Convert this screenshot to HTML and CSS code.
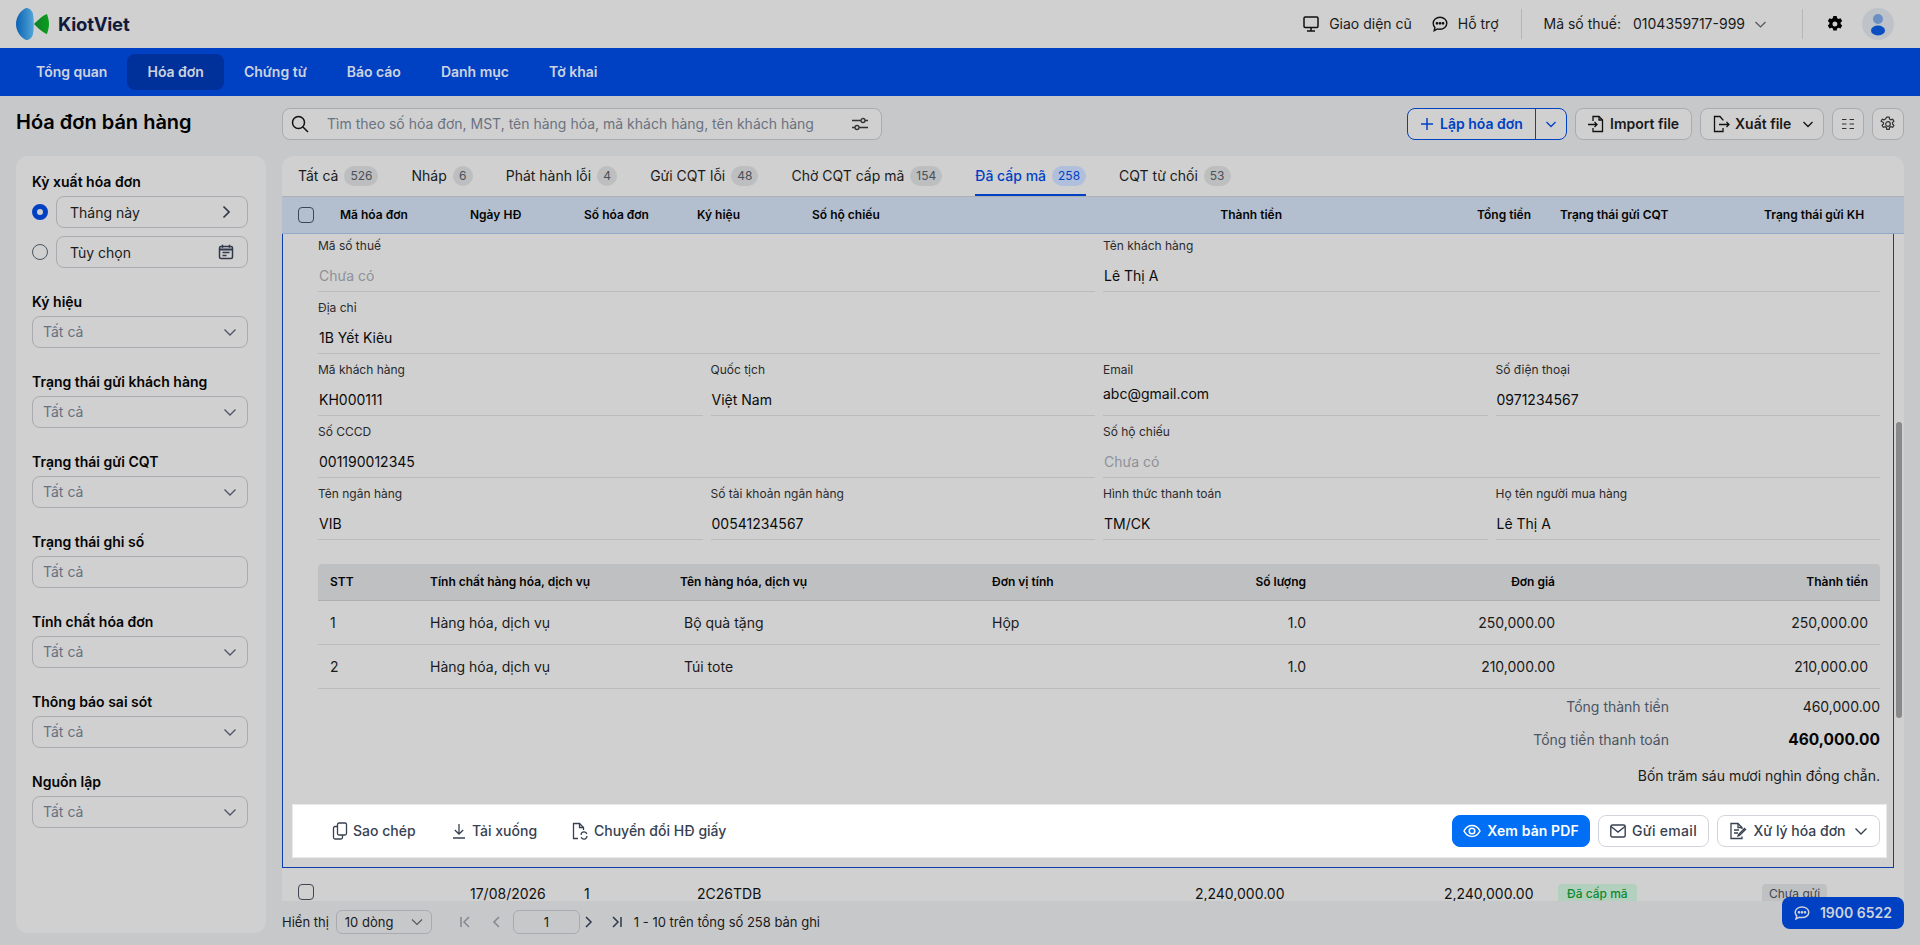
FILE: index.html
```html
<!DOCTYPE html>
<html lang="vi">
<head>
<meta charset="utf-8">
<title>Hóa đơn bán hàng</title>
<link rel="stylesheet" href="styles.css">
</head>
<body>
<header class="topbar">
  <div class="brand">
    <svg class="logo" width="36" height="32" viewBox="0 0 36 32"><defs><linearGradient id="lg1" x1="0" x2="1" y1="0" y2="0"><stop offset="0" stop-color="#0a62b4"/><stop offset="1" stop-color="#52a6d6"/></linearGradient><linearGradient id="lg2" x1="0" x2="1" y1="0" y2="0"><stop offset="0" stop-color="#0d7f2a"/><stop offset="1" stop-color="#0b9e1c"/></linearGradient></defs><path d="M10 0C4 3 0 9 0 16s4 13 10 16c3 0 6-2 7-6 1-6 1-14 0-20C16 2 13 0 10 0z" fill="url(#lg1)"/><path d="M31 6c-1 0-2 1-4 2-3 2-6 5-9 8 3 3 6 6 9 8 2 1 3 2 4 2 1-3 2-7 2-10s-1-7-2-10z" fill="url(#lg2)"/></svg>
    <span class="brand-name">KiotViet</span>
  </div>
  <div class="top-right">
    <a class="top-link">
      <svg width="16" height="16" viewBox="0 0 16 16" fill="none" stroke="#111" stroke-width="1.5"><rect x="1" y="1" width="14" height="10.5" rx="1.2"/><path d="M8 11.5V15M4 15h8"/></svg>
      <span>Giao diện cũ</span>
    </a>
    <a class="top-link link-support">
      <svg width="16" height="16" viewBox="0 0 16 16" fill="none" stroke="#111" stroke-width="1.4"><path d="M8 1.3c3.8 0 6.8 2.6 6.8 6s-3 6-6.8 6c-.9 0-1.700-.1-2.500-.4L2.200 14.600l.7-3C1.800 10.500 1.200 9 1.200 7.300c0-3.400 3-6 6.800-6z"/><circle cx="5" cy="7.300" r=".7" fill="#111"/><circle cx="8" cy="7.300" r=".7" fill="#111"/><circle cx="11" cy="7.300" r=".7" fill="#111"/></svg>
      <span>Hỗ trợ</span>
    </a>
    <span class="top-divider"></span>
    <div class="tax">
      <span>Mã số thuế:</span>
      <span>0104359717-999</span>
      <svg class="chev" width="13" height="13" viewBox="0 0 13 13" fill="none" stroke="#555" stroke-width="1.200"><path d="M1.500 4l5 5 5-5"/></svg>
    </div>
    <span class="top-divider second"></span>
    <svg class="gear" width="18" height="18" viewBox="0 0 18 18"><path fill="#000" fill-rule="evenodd" d="M7.300 1h3.400l.4 2.100 1.400.8 2-.7 1.700 2.900-1.600 1.400v1.600l1.600 1.400-1.700 2.900-2-.7-1.400.8-.4 2.100H7.300l-.4-2.100-1.400-.8-2 .7-1.700-2.900 1.600-1.400V7.500L1.800 6.100l1.700-2.900 2 .7 1.400-.8zM9 6.500a2.500 2.500 0 1 0 0 5 2.500 2.500 0 0 0 0-5z"/></svg>
    <div class="avatar">
      <svg width="32" height="32" viewBox="0 0 32 32"><circle cx="16" cy="11" r="5" fill="#6c8fc4"/><ellipse cx="16" cy="22.500" rx="7" ry="5" fill="#0a4ec2"/></svg>
    </div>
  </div>
</header>

<nav class="mainnav">
  <a class="nav-item">Tổng quan</a>
  <a class="nav-item active">Hóa đơn</a>
  <a class="nav-item">Chứng từ</a>
  <a class="nav-item">Báo cáo</a>
  <a class="nav-item">Danh mục</a>
  <a class="nav-item">Tờ khai</a>
</nav>

<div class="page">
  <aside class="left">
    <h1 class="page-title">Hóa đơn bán hàng</h1>
    <div class="filters">
      <section class="filter">
        <label class="flabel">Kỳ xuất hóa đơn</label>
        <div class="radio-row">
          <span class="radio on"></span>
          <div class="control dark"><span>Tháng này</span>
            <svg width="16" height="16" viewBox="0 0 16 16" fill="none" stroke="#30394a" stroke-width="1.700"><path d="M5.500 2.500L11 8l-5.500 5.500"/></svg>
          </div>
        </div>
        <div class="radio-row">
          <span class="radio"></span>
          <div class="control dark"><span>Tùy chọn</span>
            <svg width="16" height="16" viewBox="0 0 16 16" fill="none" stroke="#30394a" stroke-width="1.500"><rect x="1.500" y="2.500" width="13" height="12" rx="1.500"/><path d="M1.500 5.500h13" stroke-width="2"/><path d="M4.500.8v3M11.500.8v3M4.500 8.500h7M4.500 11.500h4"/></svg>
          </div>
        </div>
      </section>
      <section class="filter"><label class="flabel">Ký hiệu</label><div class="control"><span>Tất cả</span><svg class="sel-chev" width="14" height="14" viewBox="0 0 14 14" fill="none" stroke="#4b5563" stroke-width="1.300"><path d="M1.500 4.500L7 10l5.500-5.500"/></svg></div></section>
      <section class="filter"><label class="flabel">Trạng thái gửi khách hàng</label><div class="control"><span>Tất cả</span><svg class="sel-chev" width="14" height="14" viewBox="0 0 14 14" fill="none" stroke="#4b5563" stroke-width="1.300"><path d="M1.500 4.500L7 10l5.500-5.500"/></svg></div></section>
      <section class="filter"><label class="flabel">Trạng thái gửi CQT</label><div class="control"><span>Tất cả</span><svg class="sel-chev" width="14" height="14" viewBox="0 0 14 14" fill="none" stroke="#4b5563" stroke-width="1.300"><path d="M1.500 4.500L7 10l5.500-5.500"/></svg></div></section>
      <section class="filter"><label class="flabel">Trạng thái ghi số</label><div class="control"><span>Tất cả</span></div></section>
      <section class="filter"><label class="flabel">Tính chất hóa đơn</label><div class="control"><span>Tất cả</span><svg class="sel-chev" width="14" height="14" viewBox="0 0 14 14" fill="none" stroke="#4b5563" stroke-width="1.300"><path d="M1.500 4.500L7 10l5.500-5.500"/></svg></div></section>
      <section class="filter"><label class="flabel">Thông báo sai sót</label><div class="control"><span>Tất cả</span><svg class="sel-chev" width="14" height="14" viewBox="0 0 14 14" fill="none" stroke="#4b5563" stroke-width="1.300"><path d="M1.500 4.500L7 10l5.500-5.500"/></svg></div></section>
      <section class="filter"><label class="flabel">Nguồn lập</label><div class="control"><span>Tất cả</span><svg class="sel-chev" width="14" height="14" viewBox="0 0 14 14" fill="none" stroke="#4b5563" stroke-width="1.300"><path d="M1.500 4.500L7 10l5.500-5.500"/></svg></div></section>
    </div>
  </aside>

  <main class="right">
    <div class="toolbar">
      <div class="search">
        <svg width="18" height="18" viewBox="0 0 18 18" fill="none" stroke="#111" stroke-width="1.500"><circle cx="7.500" cy="7.500" r="6"/><path d="M12 12l5 5"/></svg>
        <span class="search-text">Tìm theo số hóa đơn, MST, tên hàng hóa, mã khách hàng, tên khách hàng</span>
        <svg width="18" height="16" viewBox="0 0 18 16" fill="none" stroke="#333" stroke-width="1.300"><path d="M1 4.500h9M14 4.500h3M1 11.500h3M8 11.500h9"/><circle cx="12" cy="4.500" r="2"/><circle cx="6" cy="11.500" r="2"/></svg>
      </div>
      <div class="tools">
        <div class="split">
          <span class="split-main"><svg width="14" height="14" viewBox="0 0 14 14" fill="none" stroke="#0041c4" stroke-width="1.500"><path d="M7 1v12M1 7h12"/></svg>Lập hóa đơn</span>
          <span class="split-arrow"><svg width="12" height="12" viewBox="0 0 12 12" fill="none" stroke="#0041c4" stroke-width="1.300"><path d="M1.500 4L6 8.500 10.500 4"/></svg></span>
        </div>
        <button class="tbtn w117"><svg width="18" height="18" viewBox="0 0 18 18" fill="none" stroke="#111" stroke-width="1.300"><path d="M6 6V1.500h6l3.500 3.500v11.500H6V13"/><path d="M1 9.500h9M7.500 7l2.500 2.500L7.500 12"/><path d="M12 1.500V5h3.500"/></svg>Import file</button>
        <button class="tbtn w123"><svg width="18" height="18" viewBox="0 0 18 18" fill="none" stroke="#111" stroke-width="1.300"><path d="M11 5.500V5L8 1.500H2.500v15H11V13"/><path d="M7 9.500h10M14.500 7l2.500 2.500-2.500 2.500"/></svg>Xuất file<svg class="mini" width="12" height="12" viewBox="0 0 12 12" fill="none" stroke="#111" stroke-width="1.300"><path d="M1.500 4L6 8.500 10.500 4"/></svg></button>
        <button class="tbtn icon"><svg width="14" height="14" viewBox="0 0 14 14" fill="none" stroke="#333" stroke-width="1.200"><path d="M1 2.500h4.500M8.500 2.500H13M1 7h4.500M8.500 7H13M1 11.500h4.500M8.500 11.500H13"/></svg></button>
        <button class="tbtn icon"><svg width="16" height="16" viewBox="0 0 16 16" fill="none" stroke="#333" stroke-width="1.200"><path d="M6.800 1.200h2.400l.4 1.900 1.300.7 1.800-.6 1.200 2-1.400 1.300v1.500l1.400 1.300-1.200 2-1.800-.6-1.300.7-.4 1.900H6.800l-.4-1.900-1.300-.7-1.800.6-1.200-2 1.400-1.300V6.500L1.100 5.200l1.200-2 1.800.6 1.300-.7z"/><circle cx="8" cy="8" r="2.300"/></svg></button>
      </div>
    </div>

    <div class="panel">
      <div class="tabs">
        <a class="tab">Tất cả<b class="count">526</b></a>
        <a class="tab">Nháp<b class="count">6</b></a>
        <a class="tab">Phát hành lỗi<b class="count">4</b></a>
        <a class="tab">Gửi CQT lỗi<b class="count">48</b></a>
        <a class="tab">Chờ CQT cấp mã<b class="count">154</b></a>
        <a class="tab active">Đã cấp mã<b class="count">258</b></a>
        <a class="tab">CQT từ chối<b class="count">53</b></a>
      </div>
      <div class="cols thead">
        <span class="check"></span>
        <span>Mã hóa đơn</span><span>Ngày HĐ</span><span>Số hóa đơn</span><span>Ký hiệu</span><span>Số hộ chiếu</span>
        <span class="num">Thành tiền</span><span class="num">Tổng tiền</span><span class="gap-l">Trạng thái gửi CQT</span><span>Trạng thái gửi KH</span>
      </div>

      <div class="detail">
        <div class="form">
          <div class="field span2"><label>Mã số thuế</label><div class="val muted">Chưa có</div></div>
          <div class="field span2"><label>Tên khách hàng</label><div class="val">Lê Thị A</div></div>
          <div class="field span4"><label>Địa chỉ</label><div class="val">1B Yết Kiêu</div></div>
          <div class="field"><label>Mã khách hàng</label><div class="val">KH000111</div></div>
          <div class="field"><label>Quốc tịch</label><div class="val">Việt Nam</div></div>
          <div class="field"><label>Email</label><div class="val up">abc@gmail.com</div></div>
          <div class="field"><label>Số điện thoại</label><div class="val">0971234567</div></div>
          <div class="field span2"><label>Số CCCD</label><div class="val">001190012345</div></div>
          <div class="field span2"><label>Số hộ chiếu</label><div class="val muted">Chưa có</div></div>
          <div class="field"><label>Tên ngân hàng</label><div class="val">VIB</div></div>
          <div class="field"><label>Số tài khoản ngân hàng</label><div class="val">00541234567</div></div>
          <div class="field"><label>Hình thức thanh toán</label><div class="val">TM/CK</div></div>
          <div class="field"><label>Họ tên người mua hàng</label><div class="val">Lê Thị A</div></div>
        </div>

        <div class="items">
          <div class="irow ihead"><span>STT</span><span>Tính chất hàng hóa, dịch vụ</span><span>Tên hàng hóa, dịch vụ</span><span>Đơn vị tính</span><span class="num">Số lượng</span><span class="num">Đơn giá</span><span class="num">Thành tiền</span></div>
          <div class="irow"><span>1</span><span>Hàng hóa, dịch vụ</span><span class="nudge">Bộ quà tặng</span><span>Hộp</span><span class="num">1.0</span><span class="num">250,000.00</span><span class="num">250,000.00</span></div>
          <div class="irow"><span>2</span><span>Hàng hóa, dịch vụ</span><span class="nudge">Túi tote</span><span></span><span class="num">1.0</span><span class="num">210,000.00</span><span class="num">210,000.00</span></div>
        </div>

        <div class="totals">
          <div class="trow r1"><span class="tl">Tổng thành tiền</span><span class="tv">460,000.00</span></div>
          <div class="trow r2"><span class="tl">Tổng tiền thanh toán</span><span class="tv big">460,000.00</span></div>
          <div class="words">Bốn trăm sáu mươi nghìn đồng chẵn.</div>
        </div>

        <div class="actions">
          <div class="act-left">
            <a class="act a1"><svg width="16" height="18" viewBox="0 0 16 18" fill="none" stroke="#374151" stroke-width="1.300"><rect x="5.500" y="1" width="9" height="12" rx="1.500"/><path d="M5.500 4.500H3A1.500 1.500 0 0 0 1.500 6v9.500A1.500 1.500 0 0 0 3 17h6a1.500 1.500 0 0 0 1.500-1.500V13"/></svg>Sao chép</a>
            <a class="act a2"><svg width="14" height="16" viewBox="0 0 14 16" fill="none" stroke="#374151" stroke-width="1.300"><path d="M7 1v10M2.800 7L7 11l4.200-4M1 15h12"/></svg>Tải xuống</a>
            <a class="act a3"><svg width="18" height="18" viewBox="0 0 18 18" fill="none" stroke="#374151" stroke-width="1.300"><path d="M7 16.500H2.500v-15h6L12.500 5.500V8"/><path d="M8.500 1.500v4h4"/><path d="M10 13a3 3 0 0 1 5-2.300l1 1M16 14a3 3 0 0 1-5 2.300l-1-1"/></svg>Chuyển đổi HĐ giấy</a>
          </div>
          <div class="act-right">
            <button class="btn primary w138"><svg width="18" height="18" viewBox="0 0 18 18" fill="none" stroke="#fff" stroke-width="1.500"><path d="M1 9c2-3.800 4.800-5.500 8-5.500s6 1.700 8 5.500c-2 3.800-4.800 5.500-8 5.500S3 12.800 1 9z"/><circle cx="9" cy="9" r="2.800"/></svg>Xem bản PDF</button>
            <button class="btn w111 wide"><svg width="16" height="14" viewBox="0 0 16 14" fill="none" stroke="#374151" stroke-width="1.400"><rect x=".8" y="1" width="14.400" height="12" rx="1.500"/><path d="M1 2.500l7 5.500 7-5.500"/></svg>Gửi email</button>
            <button class="btn w163"><svg width="18" height="18" viewBox="0 0 18 18" fill="none" stroke="#374151" stroke-width="1.300"><path d="M13 7V5.500L9 1.500H2v15h11v-2"/><path d="M9 1.500v4h4M5 8h5M5 11h4"/><path d="M16.500 7.500l-6 6-1.500.5.500-1.500 6-6z"/></svg>Xử lý hóa đơn<svg class="mini" width="14" height="14" viewBox="0 0 14 14" fill="none" stroke="#374151" stroke-width="1.300"><path d="M1.500 4.500L7 10l5.500-5.500"/></svg></button>
          </div>
        </div>
        <span class="thumb"></span>
      </div>

      <div class="cols trow-data">
        <span class="check"></span>
        <span class="cell"></span><span class="cell">17/08/2026</span><span class="cell">1</span><span class="cell">2C26TDB</span><span class="cell"></span>
        <span class="cell num shift">2,240,000.00</span><span class="cell num shift">2,240,000.00</span>
        <span class="gap-l"><em class="pill green">Đã cấp mã</em></span><span><em class="pill gray">Chưa gửi</em></span>
      </div>
    </div>

    <div class="pager">
      <span>Hiển thị</span>
      <div class="psel"><span>10 dòng</span><svg width="12" height="12" viewBox="0 0 12 12" fill="none" stroke="#555" stroke-width="1.100"><path d="M1 3.500L6 8.500l5-5"/></svg></div>
      <div class="pbtns">
        <svg class="p-first" width="12" height="14" viewBox="0 0 12 14" fill="none" stroke="#84878d" stroke-width="1.500"><path d="M2 2v10M10 2L5 7l5 5"/></svg>
        <svg class="p-prev" width="8" height="14" viewBox="0 0 8 14" fill="none" stroke="#84878d" stroke-width="1.500"><path d="M7 2L2 7l5 5"/></svg>
        <div class="pinput">1</div>
        <svg class="p-next" width="8" height="14" viewBox="0 0 8 14" fill="none" stroke="#30394a" stroke-width="1.500"><path d="M1 2l5 5-5 5"/></svg>
        <svg class="p-last" width="12" height="14" viewBox="0 0 12 14" fill="none" stroke="#30394a" stroke-width="1.500"><path d="M2 2l5 5-5 5M10 2v10"/></svg>
      </div>
      <span class="ptext">1 - 10 trên tổng số 258 bản ghi</span>
    </div>
  </main>
</div>

<a class="hotline"><svg width="16" height="14" viewBox="0 0 16 14" fill="none" stroke="#cfd3da" stroke-width="1.500"><path d="M8 1c3.800 0 6.800 2.300 6.800 5.300S11.800 11.600 8 11.600c-.9 0-1.800-.1-2.600-.4L2 13l.8-3C1.800 9 1.200 7.700 1.200 6.300 1.200 3.300 4.200 1 8 1z"/><circle cx="5" cy="6.300" r=".6" fill="#cfd3da"/><circle cx="8" cy="6.300" r=".6" fill="#cfd3da"/><circle cx="11" cy="6.300" r=".6" fill="#cfd3da"/></svg>1900 6522</a>
</body>
</html>
```
FILE: styles.css
```css
* { box-sizing: border-box; }
html, body { margin: 0; padding: 0; }
body {
  width: 1920px; height: 945px; overflow: hidden;
  background: #c7c8ca; color: #0b0b0c;
  font-family: Inter, "Noto Sans", sans-serif; font-size: 14px; line-height: 20px;
  display: flex; flex-direction: column; position: relative;
}
svg { flex: none; display: block; }

.topbar { height: 48px; background: #d0d0d0; display: flex; justify-content: space-between; align-items: center; padding: 0 26px 0 16px; }
.brand { display: flex; align-items: center; gap: 6px; }
.brand-name { font-size: 18.500px; font-weight: 700; color: #101a3c; letter-spacing: -.2px; }
.top-right { display: flex; align-items: center; color: #1a1a1a; }
.top-link { display: flex; align-items: center; gap: 10px; }
.link-support { margin-left: 20px; }
.top-divider { width: 1px; height: 30px; background: #b5b6b9; margin-left: 22px; }
.top-divider.second { margin-left: 35px; }
.tax { display: flex; align-items: center; margin-left: 22px; gap: 12px; }
.chev { margin-left: -3px; }
.gear { margin-left: 23px; }
.avatar { width: 32px; height: 32px; border-radius: 50%; background: #bec3c9; margin-left: 18px; }

.mainnav { height: 48px; background: #0041c4; display: flex; align-items: center; padding-left: 16px; }
.nav-item { padding: 0 20px; height: 36px; line-height: 36px; color: #cdd3df; font-weight: 600; border-radius: 8px; }
.nav-item.active { background: #00309a; }

.page { flex: 1; display: flex; gap: 16px; padding-left: 16px; min-height: 0; }
.left { width: 250px; display: flex; flex-direction: column; padding-bottom: 12px; }
.page-title { height: 60px; margin: 0; font-size: 20px; line-height: 52px; font-weight: 600; color: #000; }
.filters { flex: 1; background: #d0d0d0; border-radius: 12px; padding: 16px 18px 16px 16px; }
.filter { height: 80px; }
.filter:first-child { height: 120px; }
.flabel { display: block; height: 20px; font-weight: 600; color: #050505; margin-bottom: 4px; font-size: 14px; }
.control { height: 32px; border: 1px solid #a9abb0; border-radius: 8px; display: flex; align-items: center; justify-content: space-between; padding: 0 10px; color: #667080; }
.control.dark { color: #1a1a1a; flex: 1; padding: 0 13px; }
.control.dark span { padding-top: 1px; }
.radio-row { display: flex; align-items: center; gap: 8px; height: 32px; margin-bottom: 8px; }
.radio { width: 16px; height: 16px; border-radius: 50%; border: 1px solid #4b5563; }
.radio.on { border: 5px solid #0041c4; background: #d0d0d0; }

.right { width: 1622px; display: flex; flex-direction: column; }
.toolbar { height: 60px; flex: none; display: flex; justify-content: space-between; align-items: flex-start; padding-top: 12px; }
.search { width: 600px; height: 32px; border: 1px solid #a9abb0; border-radius: 8px; background: #d0d0d0; display: flex; align-items: center; padding: 0 12px 0 8px; color: #6b7280; }
.search-text { flex: 1; margin-left: 18px; font-size: 14px; }
.tools { display: flex; gap: 8px; }
.split { width: 160px; height: 32px; border: 1px solid #0041c4; border-radius: 8px; background: #d0d0d0; display: flex; align-items: center; color: #0041c4; font-weight: 600; }
.split-main { width: 128px; height: 30px; display: flex; align-items: center; gap: 6px; padding-left: 12px; border-right: 1px solid #0041c4; margin-right: 9px; font-weight: 600; white-space: nowrap; }
.tbtn { height: 32px; border: 1px solid #a9abb0; border-radius: 8px; background: #d0d0d0; display: flex; align-items: center; gap: 5px; padding: 0 11px; font: 600 14px/20px Inter, sans-serif; color: #1a1a1a; white-space: nowrap; }
.tbtn .mini { margin-left: 6px; }
.w117 { width: 117px; }
.w123 { width: 124px; }
.tbtn.icon { width: 32px; padding: 0; justify-content: center; }

.panel { height: 745px; flex: none; background: #d0d0d0; border-radius: 12px 12px 0 0; overflow: hidden; display: flex; flex-direction: column; position: relative; }
.tabs { height: 41px; flex: none; display: flex; gap: 33px; padding-left: 16px; border-bottom: 1px solid #aeb0b3; }
.tab { height: 40px; display: flex; align-items: center; gap: 6px; color: #1a1a1a; font-weight: 400; position: relative; white-space: nowrap; }
.count { min-width: 20px; height: 20px; border-radius: 10px; background: #bdbec0; color: #4b4f56; font-size: 12px; font-weight: 400; line-height: 20px; text-align: center; padding: 0 6px; }
.tab.active { color: #0041c4; border-bottom: 2px solid #0041c4; padding-top: 2px; font-weight: 500; }
.tab.active .count { background: #b0c0dc; color: #0041c4; }

.cols { display: grid; grid-template-columns: 42px 130px 114px 113px 115px 150px 320px 249px 233px 140px; padding-left: 16px; align-items: center; flex: none; white-space: nowrap; }
.num { text-align: right; }
.gap-l { padding-left: 29px; }
.thead { height: 37px; background: #b3bfce; font-size: 12px; font-weight: 600; color: #050505; border-bottom: 1px solid #94a9c8; }
.check { width: 16px; height: 16px; border: 1px solid #3f4652; border-radius: 4px; display: block; }

.detail { height: 634px; width: 1612px; flex: none; border: 1px solid #0b3eab; border-top: 0; display: flex; flex-direction: column; position: relative; }
.form { display: grid; grid-template-columns: repeat(4, 1fr); column-gap: 8px; margin: -4px 13px 0 35px; flex: none; }
.field { height: 62px; border-bottom: 1px solid #bbbcbe; padding-top: 8px; }
.span2 { grid-column: span 2; }
.span4 { grid-column: span 4; }
.field label { display: block; font-size: 12px; line-height: 16px; color: #2a2a2c; }
.val { margin-top: 12px; padding-left: 1px; color: #0b0b0c; }
.val.up { margin-top: 6px; padding-left: 0; }
.val.muted { color: #8e9198; }

.items { margin: 24px 13px 0 35px; flex: none; }
.irow { display: grid; grid-template-columns: 100px 250px 312px 150px 164px 249px 313px; padding: 0 12px; height: 44px; align-items: center; border-bottom: 1px solid #bbbcbe; color: #1a1a1a; white-space: nowrap; }
.ihead { height: 37px; background: #bfc0c2; font-size: 12px; font-weight: 600; color: #050505; border-radius: 4px 4px 0 0; border-bottom: 1px solid #aeb0b3; }
.nudge { padding-left: 4px; }

.totals { margin: 0 13px 0 0; flex: none; }
.trow { display: flex; justify-content: flex-end; align-items: center; }
.tl { color: #4b5563; }
.tv { width: 211px; text-align: right; color: #1a1a1a; }
.tv.big { font-size: 15.500px; font-weight: 700; color: #050505; }
.r1 { height: 36px; }
.r2 { height: 30px; }
.words { text-align: right; margin-top: 11px; color: #1a1a1a; }

.actions { margin: auto 6px 9px 9px; height: 54px; background: #fff; border: 1px solid #e9e9ea; display: flex; justify-content: space-between; align-items: center; padding: 0 6px 0 39px; flex: none; }
.act-left { display: flex; }
.act { display: flex; align-items: center; color: #374151; font-weight: 500; }
.a1 { gap: 5px; width: 120px; }
.a2 { gap: 6px; width: 119px; }
.a3 { gap: 5px; }
.act-right { display: flex; gap: 8px; }
.btn { height: 32px; border: 1px solid #d1d5db; border-radius: 8px; background: #fff; display: flex; align-items: center; justify-content: center; gap: 6px; font: 500 14px/20px Inter, sans-serif; color: #374151; padding: 0; white-space: nowrap; }
.btn.primary { background: #006ff5; border-color: #006ff5; color: #fff; font-weight: 600; letter-spacing: .1px; }
.btn.wide { letter-spacing: .3px; }
.w138 { width: 138px; }
.w111 { width: 111px; }
.w163 { width: 163px; }
.btn .mini { margin-left: 2px; }
.thumb { position: absolute; right: -9px; top: 188px; width: 6px; height: 296px; background: #88898b; border-radius: 3px; }

.trow-data { height: 33px; padding-top: 10px; overflow: hidden; align-items: start; color: #111; }
.shift { position: relative; left: 2.500px; }
.pill { display: inline-block; font-style: normal; height: 24px; line-height: 20px; border-radius: 4px; font-size: 12px; font-weight: 500; }
.green { background: #b3cfbd; color: #0d8a2e; padding: 0 9px; }
.gray { background: #bfc0c2; color: #3f4652; font-weight: 400; padding: 0 7px; }
.trow-data .pill { margin-top: 6px; margin-left: -2px; }
.trow-data .cell { margin-top: 6px; }
.trow-data .check { margin-top: 6px; }

.pager { height: 44px; flex: none; display: flex; align-items: center; color: #1a1a1a; font-size: 13px; padding-bottom: 3px; }
.psel { width: 96px; height: 24px; margin-left: 7px; border: 1px solid #a9abb0; border-radius: 6px; display: flex; align-items: center; justify-content: space-between; padding: 0 8px; }
.pbtns { display: flex; align-items: center; margin-left: 27px; }
.p-prev { margin-left: 21px; }
.pinput { width: 67px; height: 24px; border: 1px solid #a9abb0; border-radius: 6px; text-align: center; line-height: 22px; margin-left: 13px; }
.p-next { margin-left: 5px; }
.p-last { margin-left: 18px; }
.ptext { margin-left: 11px; font-size: 13px; }

.hotline { position: absolute; right: 16px; top: 897px; width: 122px; height: 32px; background: #0041c4; border-radius: 8px; color: #cfd3da; font-weight: 600; display: flex; align-items: center; justify-content: center; gap: 10px; }
```
